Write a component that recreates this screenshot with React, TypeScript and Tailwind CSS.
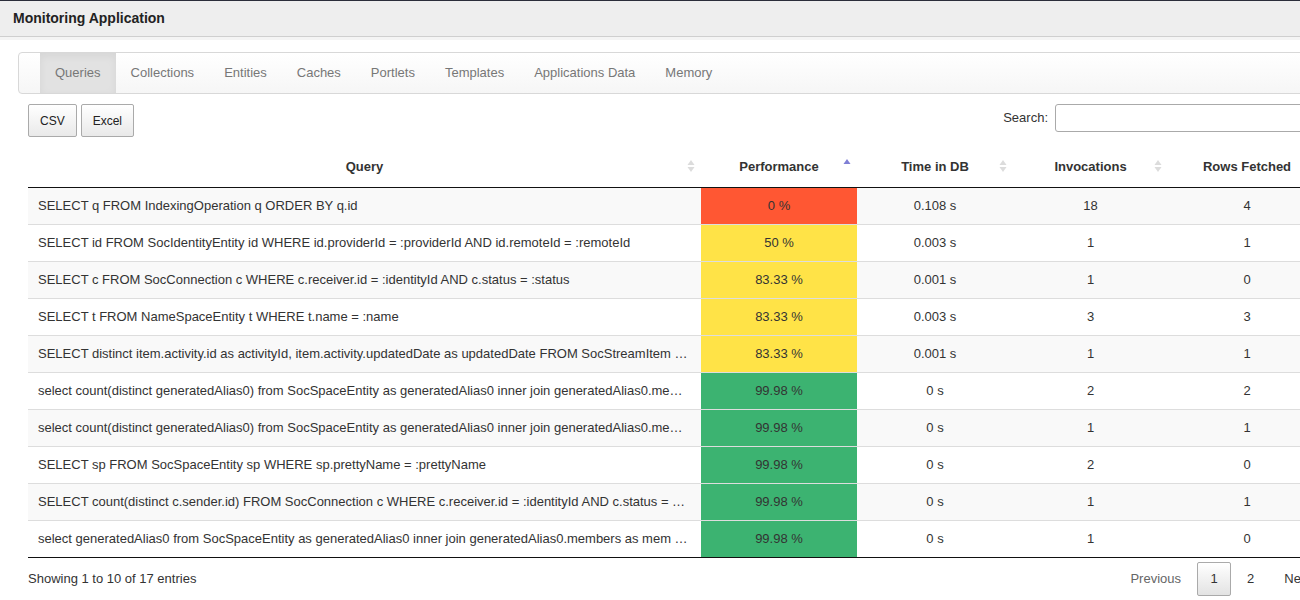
import React from "react";

type Row = {
  query: string;
  perf: string;
  level: "bad" | "mid" | "good";
  time: string;
  calls: string;
  rows: string;
};

const rows: Row[] = [
  { query: "SELECT q FROM IndexingOperation q ORDER BY q.id", perf: "0 %", level: "bad", time: "0.108 s", calls: "18", rows: "4" },
  { query: "SELECT id FROM SocIdentityEntity id WHERE id.providerId = :providerId AND id.remoteId = :remoteId", perf: "50 %", level: "mid", time: "0.003 s", calls: "1", rows: "1" },
  { query: "SELECT c FROM SocConnection c WHERE c.receiver.id = :identityId AND c.status = :status", perf: "83.33 %", level: "mid", time: "0.001 s", calls: "1", rows: "0" },
  { query: "SELECT t FROM NameSpaceEntity t WHERE t.name = :name", perf: "83.33 %", level: "mid", time: "0.003 s", calls: "3", rows: "3" },
  { query: "SELECT distinct item.activity.id as activityId, item.activity.updatedDate as updatedDate FROM SocStreamItem …", perf: "83.33 %", level: "mid", time: "0.001 s", calls: "1", rows: "1" },
  { query: "select count(distinct generatedAlias0) from SocSpaceEntity as generatedAlias0 inner join generatedAlias0.me…", perf: "99.98 %", level: "good", time: "0 s", calls: "2", rows: "2" },
  { query: "select count(distinct generatedAlias0) from SocSpaceEntity as generatedAlias0 inner join generatedAlias0.me…", perf: "99.98 %", level: "good", time: "0 s", calls: "1", rows: "1" },
  { query: "SELECT sp FROM SocSpaceEntity sp WHERE sp.prettyName = :prettyName", perf: "99.98 %", level: "good", time: "0 s", calls: "2", rows: "0" },
  { query: "SELECT count(distinct c.sender.id) FROM SocConnection c WHERE c.receiver.id = :identityId AND c.status = …", perf: "99.98 %", level: "good", time: "0 s", calls: "1", rows: "1" },
  { query: "select generatedAlias0 from SocSpaceEntity as generatedAlias0 inner join generatedAlias0.members as mem …", perf: "99.98 %", level: "good", time: "0 s", calls: "1", rows: "0" },
];

const tabs = ["Queries", "Collections", "Entities", "Caches", "Portlets", "Templates", "Applications Data", "Memory"];

function SortIcon({ active }: { active?: boolean }) {
  if (active) {
    return (
      <svg width="8" height="14" viewBox="0 0 8 14" className="absolute right-[6px] top-[14px]">
        <path d="M4 1 L7.5 6 L0.5 6 Z" fill="#7f7fd5" />
      </svg>
    );
  }
  return (
    <svg width="8" height="14" viewBox="0 0 8 14" className="absolute right-[6px] top-[15px]">
      <path d="M4 1 L7.5 6 L0.5 6 Z" fill="#dcdcdc" />
      <path d="M4 13 L7.5 8 L0.5 8 Z" fill="#dcdcdc" />
    </svg>
  );
}

const perfBg = {
  bad: "bg-[#ff5733]",
  mid: "bg-[#ffe347]",
  good: "bg-[#3cb371]",
};

export default function App() {
  return (
    <div className="w-[1300px] h-[600px] overflow-hidden bg-white text-[13px] text-[#333] font-['Liberation_Sans',Arial,sans-serif]">
      <div className="w-[1340px]">
        <header className="h-[37px] border-t border-[#2b2d3a] bg-[#eeeeee] border-b border-b-[#cfcfcf] flex items-center pl-[13px]">
          <h1 className="text-[14px] font-bold text-[#222]">Monitoring Application</h1>
        </header>
        <div className="h-[3px] bg-[#f4f4f4]" />

        <div className="pl-[18px] pt-[12px]">
          <nav className="h-[42px] flex border border-[#d8d8d8] rounded-l-[4px] bg-gradient-to-b from-white to-[#f6f6f6] pl-[21px]">
            {tabs.map((t, i) => (
              <span
                key={t}
                className={
                  "px-[15px] flex items-center text-[#777] " +
                  (i === 0 ? "bg-[#e2e2e2] shadow-[inset_0_3px_9px_rgba(0,0,0,0.06)]" : "")
                }
              >
                {t}
              </span>
            ))}
          </nav>

          <div className="pl-[10px]">
            <div className="mt-[10px] flex items-start justify-between h-[33px]">
              <div className="flex gap-[4px]">
                <button className="h-[33px] px-[11px] text-[12px] text-[#222] border border-[#aaa] rounded-[2px] bg-gradient-to-b from-white to-[#e9e9e9]">
                  CSV
                </button>
                <button className="h-[33px] px-[11px] text-[12px] text-[#222] border border-[#aaa] rounded-[2px] bg-gradient-to-b from-white to-[#e9e9e9]">
                  Excel
                </button>
              </div>
              <label className="flex items-center gap-[7px] h-[28px] mr-[5px]">
                <span>Search:</span>
                <input className="w-[280px] h-[28px] border border-[#aaa] rounded-[3px] bg-white" />
              </label>
            </div>

            <table className="mt-[7px] table-fixed border-collapse w-[1298px]">
              <colgroup>
                <col className="w-[673px]" />
                <col className="w-[156px]" />
                <col className="w-[156px]" />
                <col className="w-[155px]" />
                <col className="w-[158px]" />
              </colgroup>
              <thead>
                <tr className="h-[43px] border-b border-[#111]">
                  {["Query", "Performance", "Time in DB", "Invocations", "Rows Fetched"].map((h, i) => (
                    <th key={h} className="relative font-bold text-center px-[18px] pt-[2px]">
                      {h}
                      {i < 4 && <SortIcon active={i === 1} />}
                    </th>
                  ))}
                </tr>
              </thead>
              <tbody>
                {rows.map((r, i) => (
                  <tr key={i} className={"h-[37px] border-t border-[#ddd] first:border-t-0 " + (i % 2 === 0 ? "bg-[#f9f9f9]" : "bg-white")}>
                    <td className="px-[10px] truncate whitespace-nowrap">{r.query}</td>
                    <td className={"text-center " + perfBg[r.level]}>{r.perf}</td>
                    <td className="text-center">{r.time}</td>
                    <td className="text-center">{r.calls}</td>
                    <td className="text-center">{r.rows}</td>
                  </tr>
                ))}
              </tbody>
            </table>
            <div className="border-t border-[#111] w-[1298px]" />

            <div className="flex items-center justify-between w-[1298px] mt-[4px]">
              <span>Showing 1 to 10 of 17 entries</span>
              <div className="flex items-center mr-[15px]">
                <span className="px-[16px] text-[#666]">Previous</span>
                <span className="h-[34px] w-[34px] flex items-center justify-center border border-[#aaa] rounded-[2px] bg-gradient-to-b from-white to-[#e3e3e3] text-[#333]">1</span>
                <span className="pl-[16px] pr-[30px]">2</span>
                <span>Next</span>
              </div>
            </div>
          </div>
        </div>
      </div>
    </div>
  );
}
